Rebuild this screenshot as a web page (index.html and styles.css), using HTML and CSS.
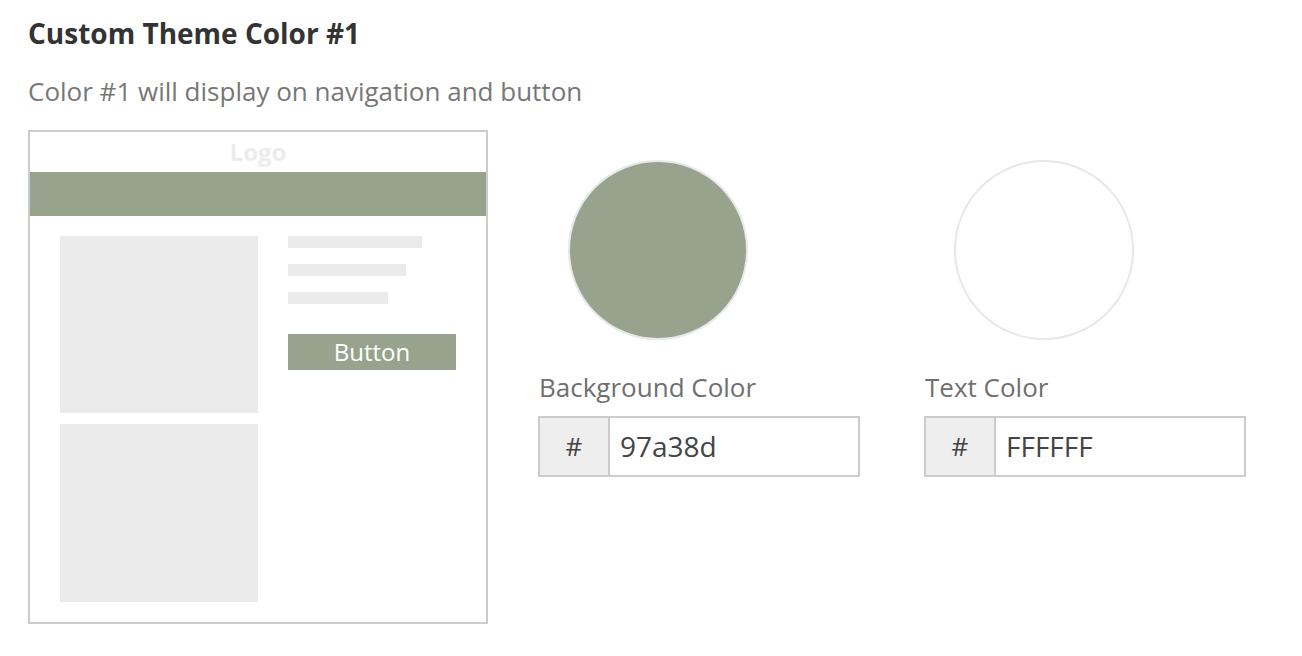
FILE: index.html
```html
<!DOCTYPE html>
<html>
<head>
<meta charset="utf-8">
<link rel="stylesheet" href="styles.css">
</head>
<body>
<div class="page">
  <h1 class="title">Custom Theme Color #1</h1>
  <p class="subtitle">Color #1 will display on navigation and button</p>
  <div class="row">
    <div class="preview">
      <div class="logo">Logo</div>
      <div class="nav"></div>
      <div class="content">
        <div class="images">
          <div class="img"></div>
          <div class="img img2"></div>
        </div>
        <div class="text">
          <div class="line l1"></div>
          <div class="line l2"></div>
          <div class="line l3"></div>
          <div class="btn">Button</div>
        </div>
      </div>
    </div>
    <div class="pickers">
      <div class="picker">
        <div class="swatch swatch-bg"></div>
        <div class="label">Background Color</div>
        <div class="field">
          <div class="prefix">#</div>
          <div class="value">97a38d</div>
        </div>
      </div>
      <div class="picker">
        <div class="swatch swatch-text"></div>
        <div class="label">Text Color</div>
        <div class="field">
          <div class="prefix">#</div>
          <div class="value">FFFFFF</div>
        </div>
      </div>
    </div>
  </div>
</div>
</body>
</html>
```
FILE: styles.css
```css
* { box-sizing: border-box; }
body {
  margin: 0;
  background: #fff;
  font-family: "Open Sans", "Liberation Sans", sans-serif;
}
.page {
  padding: 14px 28px 0 28px;
}
.title {
  margin: 0;
  font-size: 28px;
  font-weight: 700;
  line-height: 38px;
  color: #333;
}
.subtitle {
  margin: 21px 0 0 0;
  font-size: 26px;
  line-height: 36px;
  color: #777;
}
.row {
  display: flex;
  gap: 50px;
  margin-top: 21px;
}
.preview {
  width: 460px;
  height: 494px;
  border: 2px solid #ccc;
  flex: none;
}
.logo {
  height: 40px;
  line-height: 40px;
  text-align: center;
  font-size: 24px;
  font-weight: 700;
  color: #ececec;
}
.nav {
  height: 44px;
  background: #97a38d;
}
.content {
  display: flex;
  gap: 30px;
  padding: 20px 0 0 30px;
}
.images {
  display: flex;
  flex-direction: column;
  gap: 11px;
}
.img {
  width: 198px;
  height: 177px;
  background: #eaeaea;
}
.img2 { height: 178px; }
.text {
  display: flex;
  flex-direction: column;
  align-items: flex-start;
}
.line {
  height: 12px;
  background: #eaeaea;
  margin-bottom: 16px;
}
.l1 { width: 134px; }
.l2 { width: 118px; }
.l3 { width: 100px; margin-bottom: 30px; }
.btn {
  width: 168px;
  height: 36px;
  background: #97a38d;
  color: #fff;
  font-size: 24px;
  line-height: 36px;
  text-align: center;
}
.pickers {
  display: flex;
  gap: 64px;
}
.picker {
  width: 322px;
}
.swatch {
  width: 180px;
  height: 180px;
  border-radius: 50%;
  border: 2px solid #e8e8e8;
  margin: 30px 0 0 30px;
}
.swatch-bg { background: #97a38d; }
.swatch-text { background: #fff; }
.label {
  margin-top: 29px;
  font-size: 26px;
  line-height: 36px;
  color: #6f6f6f;
  padding-left: 1px;
}
.field {
  display: flex;
  height: 61px;
  margin-top: 11px;
  border: 2px solid #ccc;
}
.prefix {
  width: 70px;
  background: #eee;
  border-right: 2px solid #ccc;
  text-align: center;
  font-size: 26px;
  line-height: 57px;
  color: #444;
}
.value {
  padding-left: 10px;
  font-size: 28px;
  line-height: 57px;
  color: #444;
}
```
